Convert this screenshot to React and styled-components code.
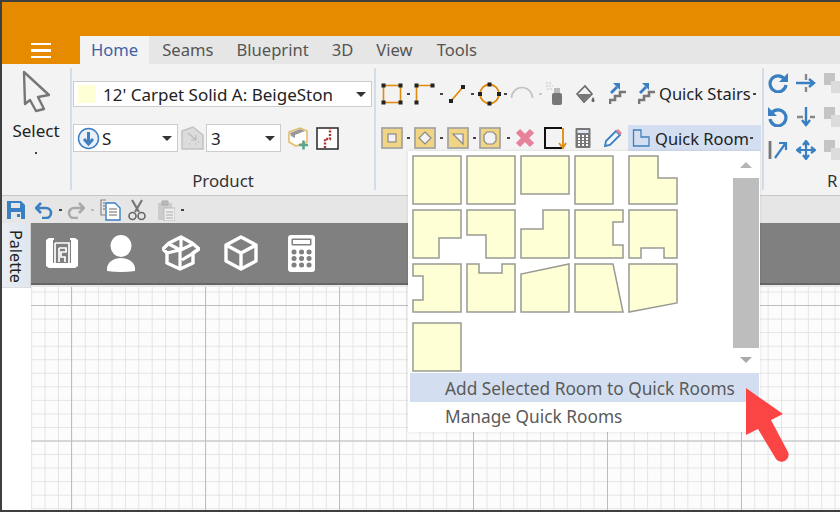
import React from "react";
import styled, { createGlobalStyle } from "styled-components";

const Global = createGlobalStyle`
  html, body { margin: 0; padding: 0; width: 840px; height: 512px; overflow: hidden; background: #fff; }
  #root { width: 840px; height: 512px; }
  * { box-sizing: border-box; }
`;

const FONT = `"Noto Sans", "Open Sans", "Liberation Sans", sans-serif`;

const Window = styled.div`
  position: relative;
  width: 840px;
  height: 512px;
  border-top: 2px solid #3f3f3f;
  border-left: 2px solid #3f3f3f;
  border-bottom: 2px solid #3f3f3f;
  overflow: hidden;
  display: flex;
  flex-direction: column;
  font-family: ${FONT};
  background: #fff;
`;
const TitleBar = styled.header`
  height: 62px;
  flex: none;
  background: #e68a00;
  display: flex;
  align-items: flex-end;
`;
const MenuButton = styled.button`
  width: 78px;
  height: 28px;
  border: 0;
  padding: 7px 0 0 0;
  background: transparent;
  display: flex;
  flex-direction: column;
  align-items: center;
  gap: 4px;
  & > i { display: block; width: 20px; height: 2.4px; background: #fff; }
`;
const TabStrip = styled.nav`
  flex: 1;
  height: 28px;
  background: #e6e6e6;
  display: flex;
  align-items: center;
`;
const Tab = styled.div`
  height: 28px;
  padding: ${p => p.$active ? "0 11px" : "0"};
  margin-right: ${p => p.$gap || 0}px;
  background: ${p => p.$active ? "#f3f3f3" : "transparent"};
  color: ${p => p.$active ? "#3d62a5" : "#555"};
  font-size: 16.6px;
  line-height: 28px;
`;
const Ribbon = styled.section`
  height: 132px;
  flex: none;
  background: #f3f3f3;
  border-bottom: 1px solid #c6c6c6;
  display: flex;
  padding-top: 4px;
`;
const Group = styled.div`
  width: ${p => p.$w}px;
  height: 122px;
  flex: none;
  border-right: ${p => p.$open ? "0" : "2px solid #d3dde9"};
  display: flex;
  flex-direction: column;
  position: relative;
`;
const SelectGroup = styled(Group)`
  align-items: center;
  padding-top: 1px;
`;
const SelectLabel = styled.div`
  margin-top: 7px;
  line-height: 22px;
  font-size: 17px;
  color: #222;
`;
const TinyDot = styled.div`
  width: 2px;
  height: 2px;
  background: #444;
  margin-top: 10px;
  flex: none;
`;
const ProductBody = styled.div`
  padding: 13px 0 0 1px;
  display: flex;
  flex-direction: column;
`;
const Combo = styled.div`
  width: ${p => p.$w}px;
  height: ${p => p.$h || 26}px;
  flex: none;
  background: #fff;
  border: 1px solid #ccc;
  display: flex;
  align-items: center;
  color: #222;
  font-size: 17px;
  position: relative;
  padding-left: ${p => p.$pl || 4}px;
`;
const ComboCaret = styled.span`
  position: absolute;
  right: 5px;
  top: 50%;
  margin-top: -2px;
  width: 0;
  height: 0;
  border-left: 5px solid transparent;
  border-right: 5px solid transparent;
  border-top: 5px solid #333;
`;
const Swatch = styled.span`
  width: 18px;
  height: 18px;
  background: #ffffd5;
  margin-right: 7px;
  flex: none;
`;
const ComboRow = styled.div`
  display: flex;
  align-items: center;
  margin-top: 17px;
`;
const GroupLabel = styled.div`
  position: absolute;
  left: 0;
  right: 0;
  bottom: -2px;
  text-align: center;
  line-height: 22px;
  font-size: 16.8px;
  color: #333;
`;
const Tools = styled.div`
  padding: 13px 0 0 5px;
  display: flex;
  flex-direction: column;
  gap: 18px;
`;
const ToolRow = styled.div`
  display: flex;
  align-items: center;
  height: 26px;
`;
const Caret = styled.span`
  width: ${p => p.$w}px;
  flex: none;
  display: flex;
  justify-content: center;
  & > i { display: block; width: 3px; height: 2px; background: ${p => p.$c || "#444"}; }
`;
const Spacer = styled.span`
  width: ${p => p.$w}px;
  flex: none;
`;
const ToolText = styled.span`
  font-size: 16.5px;
  line-height: 28px;
  color: #222;
  white-space: nowrap;
  margin-left: 4px;
`;
const QuickRoom = styled.div`
  width: 133px;
  height: 26px;
  background: #d3dff0;
  display: flex;
  align-items: center;
  padding-left: 4px;
  flex: none;
  & > b { font-weight: 400; font-size: 16.5px; color: #222; margin-left: 5px; white-space: nowrap; }
  & > i { display: block; width: 3px; height: 2px; background: #444; margin-left: 1px; }
`;
const MoveGrid = styled.div`
  padding: 5px 0 0 4px;
  display: grid;
  grid-template-columns: 20px 20px 20px;
  column-gap: 8px;
  row-gap: 13.5px;
  grid-auto-rows: 20px;
`;
const CutLabel = styled.div`
  position: absolute;
  left: 63px;
  bottom: -2px;
  line-height: 22px;
  font-size: 16.8px;
  color: #333;
`;
const QuickBar = styled.div`
  height: 27px;
  flex: none;
  background: #e6e6e6;
  display: flex;
  align-items: center;
  padding-left: 5px;
`;
const Workspace = styled.main`
  flex: 1;
  display: flex;
  min-height: 0;
`;
const Rail = styled.aside`
  width: 29px;
  flex: none;
  background: #fff;
`;
const PaletteTab = styled.div`
  width: 29px;
  height: 65px;
  background: linear-gradient(to right, #e9eef4, #dfe6ee);
  border-right: 1px solid #d0d0d0;
  border-bottom: 1px solid #ddd;
  writing-mode: vertical-rl;
  font-size: 16.2px;
  color: #222;
  line-height: 29px;
  padding-top: 7px;
`;
const Stage = styled.div`
  flex: 1;
  display: flex;
  flex-direction: column;
  min-width: 0;
`;
const IconBand = styled.div`
  height: 62px;
  flex: none;
  background: #808080;
  border-bottom: 2px solid #666;
  display: flex;
  align-items: center;
  padding-left: 15px;
`;
const Canvas = styled.div`
  flex: 1;
  border-top: 2px solid #e8e8e8;
  background-color: #fcfcfc;
  background-image:
    linear-gradient(to right, #bdbdbd 1px, transparent 1px),
    linear-gradient(to bottom, #bdbdbd 1px, transparent 1px),
    linear-gradient(to right, #e4e4e4 1px, transparent 1px),
    linear-gradient(to bottom, #e4e4e4 1px, transparent 1px);
  background-size: 134px 135.5px, 134px 135.5px, 13.4px 13.4px, 13.55px 13.55px;
  background-position: 40px 18px, 40px 18px, 0.2px 0, 0 4.5px;
`;
const Popup = styled.div`
  position: absolute;
  left: 406px;
  top: 149px;
  width: 352px;
  height: 281px;
  background: #fff;
  box-shadow: 0 0 3px rgba(0,0,0,0.12);
  display: flex;
  flex-direction: column;
`;
const PopupBody = styled.div`
  height: 222px;
  flex: none;
  display: flex;
  justify-content: space-between;
`;
const RoomGrid = styled.div`
  padding: 4px 0 0 4px;
  display: grid;
  grid-template-columns: repeat(5, 54px);
  grid-template-rows: 54px 54px 59px 50px;
  align-items: start;
`;
const RoomSvg = styled.svg`
  display: block;
  width: 50px;
  height: 50px;
`;
const Scrollbar = styled.div`
  width: 26px;
  margin-right: 1px;
  display: flex;
  flex-direction: column;
  align-items: center;
  padding-top: 11px;
`;
const ScrollUp = styled.span`
  width: 0; height: 0;
  border-left: 6px solid transparent;
  border-right: 6px solid transparent;
  border-bottom: 6px solid #b4b4b4;
`;
const ScrollDown = styled.span`
  width: 0; height: 0;
  border-left: 6px solid transparent;
  border-right: 6px solid transparent;
  border-top: 6px solid #aaa;
  margin-top: 9px;
`;
const ScrollThumb = styled.div`
  width: 26px;
  height: 170px;
  background: #bdbdbd;
  margin-top: 10px;
`;
const MenuItem = styled.div`
  height: 29px;
  flex: none;
  margin: 0 1px 0 2px;
  padding-left: 35px;
  background: ${p => p.$hi ? "#d3dff0" : "transparent"};
  color: #5a5a5a;
  font-size: 17.3px;
  line-height: ${p => p.$hi ? 32 : 29}px;
`;
const Pointer = styled.svg`
  position: absolute;
  left: 738px;
  top: 378px;
  width: 60px;
  height: 90px;
`;

const Ico = ({ w, h, vb, children }) => (
  <svg width={w} height={h} viewBox={vb || `0 0 ${w} ${h}`} style={{ display: "block", flex: "none" }}>{children}</svg>
);

const Node = ({ x, y }) => <rect x={x - 2} y={y - 2} width="4" height="4" fill="#222" />;

const rooms = [
  "1 1H49V49H1Z",
  "1 1H49V49H1Z",
  "1 1H49V39H1Z",
  "1 1H39V49H1Z",
  "1 1H30V23H49V49H1Z",
  "1 1H49V29H27V49H1Z",
  "1 1H49V49H20V26H1Z",
  "23 1H49V49H1V20H23Z",
  "1 1H49V13H39V36H49V49H1Z",
  "1 1H49V49H36V39H13V49H1Z",
  "1 1H49V49H1V37H11V13H1Z",
  "1 1H13V10H36V1H49V49H1Z",
  "49 1V49H1V11Z",
  "1 1H39L49 49H1Z",
  "1 1H49V40L1 49Z",
  "1 1H49V49H1Z",
];

const Room = ({ d }) => (
  <RoomSvg viewBox="0 0 50 50">
    <path d={`M${d}`} fill="#ffffd5" stroke="#9a9a94" strokeWidth="1.5" />
  </RoomSvg>
);

const ModeTile = ({ children }) => (
  <Ico w={22} h={22}>
    <rect x="1" y="1" width="20" height="20" fill="#f2d584" stroke="#a7a7a0" strokeWidth="1.8" />
    {children}
  </Ico>
);

const Gears = () => (
  <Ico w={20} h={22}>
    <rect x="0" y="0" width="11" height="12" fill="#c4c4c4" />
    <rect x="7" y="8" width="13" height="12" fill="#dcdcdc" />
  </Ico>
);

const StairsIcon = () => (
  <Ico w={17} h={22}>
    <path d="M1 21V17H6V13H11V9H17" fill="none" stroke="#777" strokeWidth="2.6" />
    <path d="M2 10L8 4" stroke="#3a7fc1" strokeWidth="2.8" />
    <path d="M4 0H11V7Z" fill="#3a7fc1" />
  </Ico>
);

export default function App() {
  return (
    <Window>
      <Global />
      <TitleBar>
        <MenuButton aria-label="menu"><i /><i /><i /></MenuButton>
        <TabStrip>
          <Tab $active $gap={13}>Home</Tab>
          <Tab $gap={23}>Seams</Tab>
          <Tab $gap={23}>Blueprint</Tab>
          <Tab $gap={23}>3D</Tab>
          <Tab $gap={24}>View</Tab>
          <Tab>Tools</Tab>
        </TabStrip>
      </TitleBar>

      <Ribbon>
        <SelectGroup $w={70}>
          <Ico w={30} h={44}>
            <path d="M3 3L28 26L17 28L23 40L15 42L9 31L4 35Z" fill="#f3f3f3" stroke="#777" strokeWidth="2.4" strokeLinejoin="round" />
          </Ico>
          <SelectLabel>Select</SelectLabel>
          <TinyDot />
        </SelectGroup>

        <Group $w={304}>
          <ProductBody>
            <Combo $w={299}>
              <Swatch />12' Carpet Solid A: BeigeSton
              <ComboCaret />
            </Combo>
            <ComboRow>
              <Combo $w={105} $h={28} $pl={3}>
                <Ico w={23} h={23}>
                  <circle cx="11.5" cy="11.5" r="10" fill="#eaf1fa" stroke="#3f7fbf" strokeWidth="1.5" />
                  <path d="M11.5 5V16M7 12L11.5 17L16 12" fill="none" stroke="#3f7fbf" strokeWidth="3" />
                </Ico>
                <Spacer $w={2} />S
                <ComboCaret />
              </Combo>
              <Spacer $w={3} />
              <Ico w={23} h={24}>
                <path d="M1 5L12 1L22 9V23H1Z" fill="#dcdcdc" stroke="#c2c2c2" strokeWidth="1.5" />
                <path d="M7 7L15 14M15 9V14H10" fill="none" stroke="#bbb" strokeWidth="1.2" />
                <path d="M8 18h1M14 18h1M17 16h1" stroke="#aaa" />
              </Ico>
              <Spacer $w={2} />
              <Combo $w={75} $h={28} $pl={4}>
                3
                <ComboCaret />
              </Combo>
              <Spacer $w={6} />
              <Ico w={22} h={24}>
                <path d="M2 6L13 2L20 5V16L9 20L2 16Z" fill="#fff" stroke="#e4bd6a" strokeWidth="1.6" />
                <path d="M3 7L13 3L18 5L8 9V12L4 10Z" fill="#999" />
                <path d="M12 19h9M16.5 14.5v9" stroke="#5aa58f" strokeWidth="2.6" />
              </Ico>
              <Spacer $w={7} />
              <Ico w={23} h={23}>
                <rect x="1" y="1" width="21" height="21" fill="#fff" stroke="#333" strokeWidth="1.6" />
                <path d="M9 21V12H14V1" fill="none" stroke="#a33" strokeWidth="2.4" strokeDasharray="2 1.4" />
              </Ico>
            </ComboRow>
          </ProductBody>
          <GroupLabel>Product</GroupLabel>
        </Group>

        <Group $w={388}>
          <Tools>
            <ToolRow>
              <Ico w={22} h={22}>
                <rect x="2.5" y="2.5" width="17" height="17" fill="none" stroke="#e08a10" strokeWidth="1.6" />
                <Node x={2.5} y={2.5} /><Node x={19.5} y={2.5} /><Node x={2.5} y={19.5} /><Node x={19.5} y={19.5} />
              </Ico>
              <Caret $w={11}><i /></Caret>
              <Ico w={21} h={22}>
                <path d="M18.5 2.5H2.5V19.5" fill="none" stroke="#e08a10" strokeWidth="1.6" />
                <Node x={2.5} y={2.5} /><Node x={18.5} y={2.5} /><Node x={2.5} y={19.5} />
              </Ico>
              <Caret $w={13}><i /></Caret>
              <Ico w={18} h={22}>
                <path d="M3 18L15 4" stroke="#e08a10" strokeWidth="1.8" />
                <Node x={3} y={18} /><Node x={15} y={4} />
              </Ico>
              <Caret $w={12}><i /></Caret>
              <Ico w={23} h={24}>
                <circle cx="11.5" cy="12" r="9.5" fill="none" stroke="#e08a10" strokeWidth="1.8" />
                <Node x={11.5} y={2.5} /><Node x={11.5} y={21.5} /><Node x={2} y={12} /><Node x={21} y={12} />
              </Ico>
              <Caret $w={9}><i /></Caret>
              <Ico w={24} h={22}>
                <path d="M1.5 15A10.5 10.5 0 0 1 22.5 15" fill="none" stroke="#c2c2c2" strokeWidth="1.6" />
              </Ico>
              <Caret $w={12} $c="#c8c8c8"><i /></Caret>
              <Ico w={17} h={24}>
                <rect x="6" y="11" width="10" height="12" rx="2" fill="#777" />
                <rect x="8" y="6" width="6" height="5" fill="#bbb" />
                <path d="M0 1h2M3 1h2M0 4h2M3 4h2M6 4h1M1 7h2M4 7h2" stroke="#c8c8c8" strokeWidth="1.2" />
              </Ico>
              <Spacer $w={13} />
              <Ico w={20} h={22}>
                <path d="M1 11L9 3L16 11L8 19Z" fill="#f3f3f3" stroke="#666" strokeWidth="1.6" />
                <path d="M2 11H15L8 18Z" fill="#777" />
                <path d="M17 14C15 17 15 19 17 19C19 19 19 17 17 14Z" fill="#666" />
              </Ico>
              <Spacer $w={13} />
              <StairsIcon />
              <Spacer $w={12} />
              <StairsIcon />
              <ToolText>Quick Stairs</ToolText>
              <Caret $w={8}><i /></Caret>
            </ToolRow>
            <ToolRow>
              <ModeTile><rect x="7" y="7" width="8" height="8" fill="#f3f3f3" stroke="#888" strokeWidth="1.2" /></ModeTile>
              <Caret $w={11}><i /></Caret>
              <ModeTile><path d="M11 5L17 11L11 17L5 11Z" fill="#f3f3f3" stroke="#888" strokeWidth="1.2" /></ModeTile>
              <Caret $w={11}><i /></Caret>
              <ModeTile><path d="M6 7H16V17Z" fill="#f3f3f3" stroke="#888" strokeWidth="1.2" /></ModeTile>
              <Caret $w={10}><i /></Caret>
              <ModeTile><path d="M8 5H14L17 8V14L14 17H8L5 14V8Z" fill="#f3f3f3" stroke="#888" strokeWidth="1.2" /></ModeTile>
              <Caret $w={14}><i /></Caret>
              <Ico w={20} h={20}>
                <path d="M3 3L17 17M17 3L3 17" stroke="#e6839a" strokeWidth="6" />
              </Ico>
              <Spacer $w={8} />
              <Ico w={24} h={24}>
                <path d="M19 2H2V22H19" fill="none" stroke="#111" strokeWidth="2" />
                <path d="M20 2V20M16 17L20 22L23 17" fill="none" stroke="#e08a10" strokeWidth="1.8" />
              </Ico>
              <Spacer $w={8} />
              <Ico w={16} h={22}>
                <rect x="0.5" y="1" width="15" height="20" rx="1" fill="#777" />
                <rect x="2.5" y="3" width="11" height="3" fill="#dfe8f2" />
                <path d="M3 9h2M7 9h2M11 9h2M3 12h2M7 12h2M11 12h2M3 15h2M7 15h2M11 15h2M3 18h2M7 18h2M11 18h2" stroke="#fff" strokeWidth="2" />
              </Ico>
              <Spacer $w={12} />
              <Ico w={20} h={20}>
                <path d="M2 18L3 13L13 3L17 7L7 17Z" fill="#f3f7fb" stroke="#3a7fc1" strokeWidth="1.8" />
                <path d="M14 2L18 6" stroke="#e6839a" strokeWidth="3" />
              </Ico>
              <Spacer $w={5} />
              <QuickRoom>
                <Ico w={18} h={20}>
                  <path d="M1.5 2H9V9H17V18H1.5Z" fill="none" stroke="#3f7fbf" strokeWidth="1.3" />
                </Ico>
                <b>Quick Room</b>
                <i />
              </QuickRoom>
            </ToolRow>
          </Tools>
        </Group>

        <Group $w={78} $open>
          <MoveGrid>
            <Ico w={20} h={20}>
              <path d="M16.5 6A8 8 0 1 0 18 12" fill="none" stroke="#3a7fc1" strokeWidth="3.2" />
              <path d="M11 9H20V0Z" fill="#3a7fc1" />
            </Ico>
            <Ico w={20} h={20}>
              <path d="M0 10H17M13 6L18 10L13 14" fill="none" stroke="#3a7fc1" strokeWidth="2.4" />
              <path d="M10 1V19" stroke="#888" strokeWidth="2.4" strokeDasharray="6 7" />
            </Ico>
            <Gears />
            <Ico w={20} h={20}>
              <path d="M3.5 6A8 8 0 1 1 2 12" fill="none" stroke="#3a7fc1" strokeWidth="3.2" />
              <path d="M9 9H0V0Z" fill="#3a7fc1" />
            </Ico>
            <Ico w={20} h={20}>
              <path d="M10 0V17M6 13L10 18L14 13" fill="none" stroke="#3a7fc1" strokeWidth="2.4" />
              <path d="M1 10H19" stroke="#888" strokeWidth="2.4" strokeDasharray="6 7" />
            </Ico>
            <Gears />
            <Ico w={20} h={20}>
              <path d="M2 1V19" stroke="#777" strokeWidth="2.8" />
              <path d="M7 18L17 4M11 3H18V10" fill="none" stroke="#3a7fc1" strokeWidth="2.2" />
            </Ico>
            <Ico w={20} h={20}>
              <path d="M10 2V18M2 10H18M7 5L10 1L13 5M7 15L10 19L13 15M5 7L1 10L5 13M15 7L19 10L15 13" fill="none" stroke="#3a7fc1" strokeWidth="2.2" />
            </Ico>
            <Gears />
          </MoveGrid>
          <CutLabel>R</CutLabel>
        </Group>
      </Ribbon>

      <QuickBar>
        <Ico w={18} h={18}>
          <path d="M0 0H14L18 4V18H0Z" fill="#3a7fc1" />
          <rect x="4" y="2" width="9" height="5" fill="#e6e6e6" />
          <rect x="4" y="11" width="10" height="7" fill="#e6e6e6" />
          <rect x="10" y="13" width="3" height="3" fill="#3a7fc1" />
        </Ico>
        <Spacer $w={10} />
        <Ico w={18} h={18}>
          <path d="M6 2L1 7L6 12M2 7H11A5 5 0 0 1 11 17H7" fill="none" stroke="#3a7fc1" strokeWidth="2.6" />
        </Ico>
        <Caret $w={14}><i /></Caret>
        <Ico w={18} h={18}>
          <path d="M12 2L17 7L12 12M16 7H7A5 5 0 0 0 7 17H11" fill="none" stroke="#aaa" strokeWidth="2.6" />
        </Ico>
        <Caret $w={15} $c="#bbb"><i /></Caret>
        <Ico w={21} h={22}>
          <path d="M6 1H1V16H6" fill="none" stroke="#888" strokeWidth="1.2" />
          <path d="M6 4H15L20 9V21H6Z" fill="#fff" stroke="#3a7fc1" strokeWidth="1.4" />
          <path d="M9 10H17M9 13H17M9 16H17M3 4H5M3 7H5M3 10H5" stroke="#666" />
        </Ico>
        <Spacer $w={7} />
        <Ico w={18} h={22}>
          <path d="M4 1L11 13M14 1L7 13" stroke="#777" strokeWidth="2.2" />
          <circle cx="4.5" cy="17" r="3.5" fill="none" stroke="#666" strokeWidth="1.6" />
          <circle cx="13.5" cy="17" r="3.5" fill="none" stroke="#666" strokeWidth="1.6" />
        </Ico>
        <Spacer $w={11} />
        <Ico w={18} h={22}>
          <path d="M1 4H15V21H1Z" fill="#ccc" />
          <path d="M5 2H11V6H5Z" fill="#bbb" stroke="#aaa" />
          <rect x="7" y="9" width="11" height="13" fill="#eee" stroke="#bbb" />
          <path d="M9 13H16M9 16H16M9 19H16" stroke="#aaa" />
        </Ico>
        <Caret $w={14}><i /></Caret>
      </QuickBar>

      <Workspace>
        <Rail>
          <PaletteTab>Palette</PaletteTab>
        </Rail>
        <Stage>
          <IconBand>
            <Ico w={32} h={32}>
              <path d="M3 1H8V3H24V1H29L32 3V29L29 31H3L0 29V3Z" fill="#fff" />
              <path d="M7 3V26H25V3Z" fill="#808080" />
              <path d="M9 6H23V26M9 6V26M13 11H20V15H15V20H19V25M13 11V25M3 28H29" fill="none" stroke="#fff" strokeWidth="1.7" />
            </Ico>
            <Spacer $w={29} />
            <Ico w={28} h={37}>
              <ellipse cx="14" cy="11" rx="10.5" ry="11" fill="#fff" />
              <path d="M0 36C-1 28 6 23 14 23C22 23 29 28 28 36Q14 38 0 36Z" fill="#fff" />
            </Ico>
            <Spacer $w={27} />
            <Ico w={38} h={36}>
              <path d="M19 2L30 8L37 14L31 18V28L18 34L5 28V18L1 14L7 8Z" fill="none" stroke="#fff" strokeWidth="3.4" strokeLinejoin="round" />
              <path d="M7 9L18 15M18 15V33M19 2V15L31 9M5 18L18 15M20 25L33 17" fill="none" stroke="#fff" strokeWidth="3.2" />
            </Ico>
            <Spacer $w={24} />
            <Ico w={34} h={36}>
              <path d="M17 2L32 10V26L17 34L2 26V10Z" fill="none" stroke="#fff" strokeWidth="3.4" strokeLinejoin="round" />
              <path d="M2 10L17 18L32 10M17 18V34" fill="none" stroke="#fff" strokeWidth="3.4" />
            </Ico>
            <Spacer $w={30} />
            <Ico w={27} h={37}>
              <rect x="0" y="0" width="27" height="37" rx="3" fill="#fff" />
              <rect x="3.5" y="3.5" width="20" height="7" rx="1" fill="#808080" />
              <rect x="5" y="5" width="17" height="4" fill="#fff" />
              <path d="M6 17h.1M13.5 17h.1M21 17h.1M6 23.5h.1M13.5 23.5h.1M21 23.5h.1M6 30h.1M13.5 30h.1M21 30h.1" stroke="#808080" strokeWidth="5" strokeLinecap="round" />
            </Ico>
          </IconBand>
          <Canvas />
        </Stage>
      </Workspace>

      <Popup>
        <PopupBody>
          <RoomGrid>
            {rooms.map((d, i) => <Room key={i} d={d} />)}
          </RoomGrid>
          <Scrollbar>
            <ScrollUp />
            <ScrollThumb />
            <ScrollDown />
          </Scrollbar>
        </PopupBody>
        <MenuItem $hi>Add Selected Room to Quick Rooms</MenuItem>
        <MenuItem>Manage Quick Rooms</MenuItem>
      </Popup>

      <Pointer viewBox="0 0 60 90">
        <path d="M6 8L43 34L31 40L48 72A7 7 0 0 1 36 79L18 49L6 55Z" fill="#fb4444" />
      </Pointer>
    </Window>
  );
}
